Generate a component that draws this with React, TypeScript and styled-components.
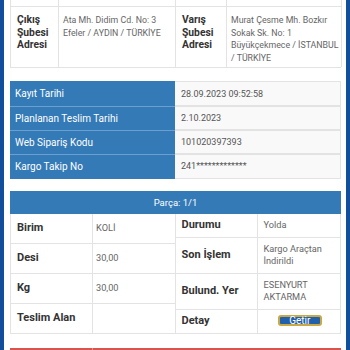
import React from "react";
import styled, { createGlobalStyle } from "styled-components";

const GlobalStyle = createGlobalStyle`
  html, body {
    margin: 0;
    padding: 0;
    background: #ffffff;
  }
  body {
    font-family: Roboto, "Liberation Sans", sans-serif;
  }
  * {
    box-sizing: border-box;
  }
`;

const BLUE = "#337ab7";

const Frame = styled.div`
  width: 350px;
  height: 350px;
  overflow: hidden;
  background: #ffffff;
  border-left: 4px solid #114f9c;
  border-right: 4px solid #114f9c;
  padding: 0 5px 0 6px;
`;

const AddressTable = styled.div`
  display: grid;
  grid-template-columns: 48px 117px 51px 115px;
  border-left: 1px solid #e3e3e3;
  border-bottom: 1px solid #e3e3e3;
`;

const Cell = styled.div<{ $bold?: boolean; $h?: number }>`
  border-right: 1px solid #e3e3e3;
  border-top: ${(p) => (p.$h ? "none" : "1px solid #e3e3e3")};
  height: ${(p) => (p.$h ? `${p.$h}px` : "auto")};
  padding: ${(p) => (p.$h ? "0" : p.$bold ? "7px 2px 3px 6px" : "7px 0 3px 4px")};
  font-size: ${(p) => (p.$bold ? "10.3px" : "8.8px")};
  font-weight: ${(p) => (p.$bold ? 700 : 400)};
  color: ${(p) => (p.$bold ? "#333" : "#666")};
  line-height: 12.6px;
`;

const InfoTable = styled.div`
  margin-top: 13px;
  display: grid;
  grid-template-columns: 165px 166px;
`;

const InfoLabel = styled.div<{ $first?: boolean }>`
  background: ${BLUE};
  color: #ffffff;
  height: 24.3px;
  display: flex;
  align-items: center;
  padding-left: 5px;
  font-size: 10px;
  border-top: ${(p) => (p.$first ? "none" : "1px solid #6a9fcf")};
`;

const InfoValue = styled.div`
  background: #f9f9f9;
  color: #555;
  height: 24.3px;
  display: flex;
  align-items: center;
  padding-left: 6px;
  font-size: 9px;
  border-top: 1px solid #e3e3e3;
  border-right: 1px solid #e3e3e3;
  border-bottom: 1px solid #e3e3e3;
  margin-bottom: -1px;
`;

const PartHeader = styled.div`
  margin-top: 12px;
  background: ${BLUE};
  color: #ffffff;
  height: 23px;
  display: flex;
  align-items: center;
  justify-content: center;
  font-size: 9.5px;
`;

const PartBody = styled.div`
  display: flex;
  align-items: stretch;
`;

const Half = styled.div`
  width: 50%;
  display: flex;
  flex-direction: column;
  border-left: 1px solid #e3e3e3;
  border-right: 1px solid #e3e3e3;
  border-bottom: 1px solid #e3e3e3;
  & + & {
    border-left: none;
  }
`;

const PartRow = styled.div<{ $stretch?: boolean }>`
  display: grid;
  grid-template-columns: 82px 1fr;
  flex: ${(p) => (p.$stretch ? 1 : "none")};
  border-top: 1px solid #e3e3e3;
  &:first-child {
    border-top: none;
  }
`;

const PartLabel = styled.div`
  display: flex;
  align-items: center;
  padding: 5px 6px 6px;
  font-size: 11px;
  font-weight: 700;
  color: #333;
  line-height: 12px;
  border-right: 1px solid #e3e3e3;
`;

const PartValue = styled.div<{ $center?: boolean; $pad?: number }>`
  display: flex;
  align-items: center;
  justify-content: ${(p) => (p.$center ? "center" : "flex-start")};
  padding: 5px 4px 6px ${(p) => p.$pad ?? 6}px;
  font-size: 9.2px;
  color: #666;
  line-height: 12px;
`;

const GetirButton = styled.button`
  width: 44px;
  height: 11px;
  padding: 0;
  border: 2px solid #c9a845;
  border-radius: 3px;
  background: #2160ab;
  color: #ffffff;
  font-family: Roboto, "Liberation Sans", sans-serif;
  font-size: 10px;
  line-height: 7px;
  display: flex;
  align-items: center;
  justify-content: center;
`;

const RedBar = styled.div`
  margin-top: 14px;
  height: 20px;
  display: grid;
  grid-template-columns: 82px 1fr;
  background: #d9534f;
  & > div + div {
    border-left: 1px solid #e58a87;
  }
`;

const leftParts = [
  { label: "Birim", value: "KOLİ" },
  { label: "Desi", value: "30,00" },
  { label: "Kg", value: "30,00" },
  { label: "Teslim Alan", value: "" },
];

const rightParts = [
  { label: "Durumu", value: "Yolda" },
  { label: "Son İşlem", value: "Kargo Araçtan İndirildi" },
  { label: "Bulund. Yer", value: "ESENYURT AKTARMA" },
];

const info = [
  { label: "Kayıt Tarihi", value: "28.09.2023 09:52:58" },
  { label: "Planlanan Teslim Tarihi", value: "2.10.2023" },
  { label: "Web Sipariş Kodu", value: "101020397393" },
  { label: "Kargo Takip No", value: "241*************" },
];

const App = () => {
  return (
    <>
      <GlobalStyle />
      <Frame>
        <AddressTable>
          <Cell $h={6} />
          <Cell $h={6} />
          <Cell $h={6} />
          <Cell $h={6} />
          <Cell $bold>Çıkış Şubesi Adresi</Cell>
          <Cell>Ata Mh. Didim Cd. No: 3 Efeler / AYDIN / TÜRKİYE</Cell>
          <Cell $bold>Varış Şubesi Adresi</Cell>
          <Cell>Murat Çesme Mh. Bozkır Sokak Sk. No: 1 Büyükçekmece / İSTANBUL / TÜRKİYE</Cell>
        </AddressTable>

        <InfoTable>
          {info.map((row, i) => (
            <React.Fragment key={row.label}>
              <InfoLabel $first={i === 0}>{row.label}</InfoLabel>
              <InfoValue>{row.value}</InfoValue>
            </React.Fragment>
          ))}
        </InfoTable>

        <PartHeader>Parça: 1/1</PartHeader>
        <PartBody>
          <Half>
            {leftParts.map((p) => (
              <PartRow key={p.label} $stretch>
                <PartLabel>{p.label}</PartLabel>
                <PartValue $pad={3}>{p.value}</PartValue>
              </PartRow>
            ))}
          </Half>
          <Half>
            {rightParts.map((p) => (
              <PartRow key={p.label}>
                <PartLabel>{p.label}</PartLabel>
                <PartValue>{p.value}</PartValue>
              </PartRow>
            ))}
            <PartRow>
              <PartLabel>Detay</PartLabel>
              <PartValue $center>
                <GetirButton>Getir</GetirButton>
              </PartValue>
            </PartRow>
          </Half>
        </PartBody>

        <RedBar>
          <div />
          <div />
        </RedBar>
      </Frame>
    </>
  );
};

export default App;
